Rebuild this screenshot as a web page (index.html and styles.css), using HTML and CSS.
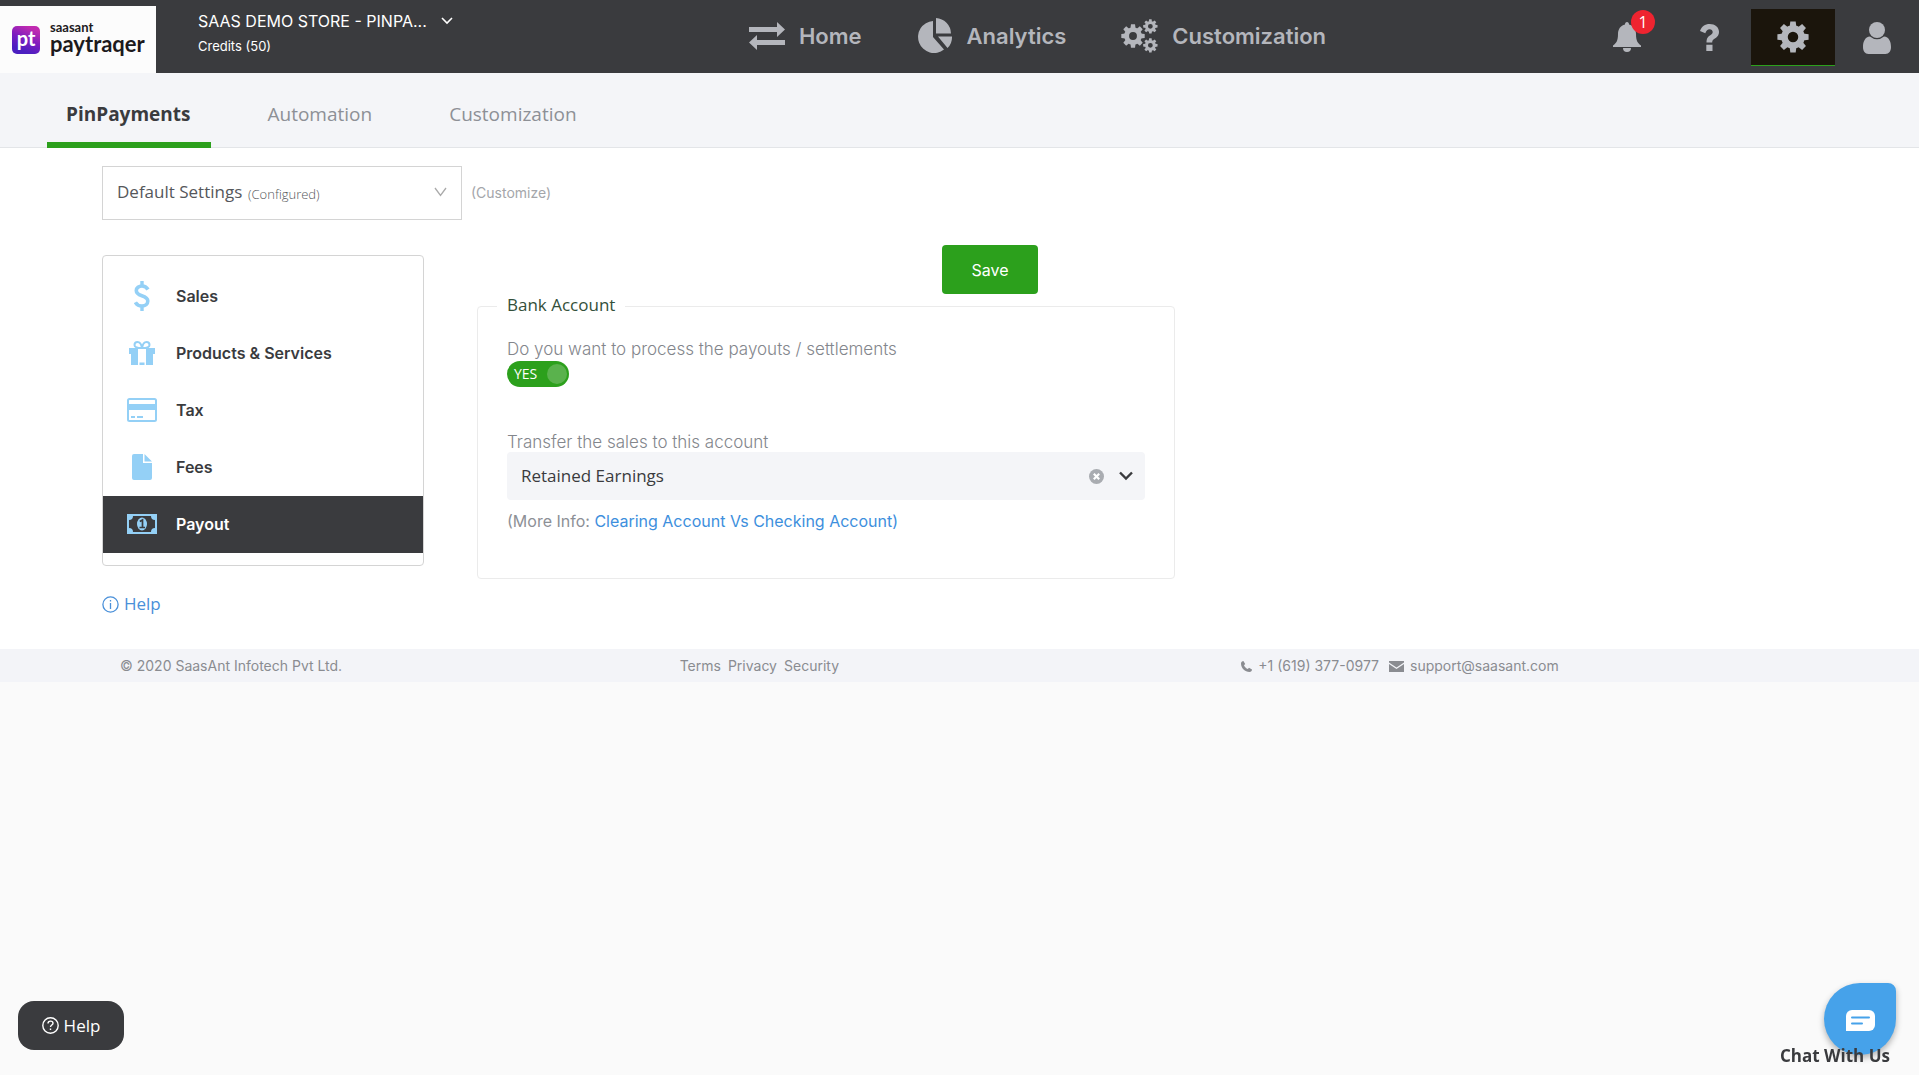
FILE: index.html
```html
<!DOCTYPE html>
<html lang="en">
<head>
<meta charset="utf-8">
<title>PinPayments settings - PayTraqer</title>
<link rel="stylesheet" href="styles.css">
</head>
<body>
<svg class="sprite" aria-hidden="true">
  <defs>
    <g id="gear">
      <circle cx="16" cy="16" r="8.500" fill="none" stroke="currentColor" stroke-width="6.500"/>
      <g fill="currentColor">
        <path id="tooth" d="M12.600 6 L13.300 .4 H18.700 L19.400 6 Z"/>
        <use href="#tooth" transform="rotate(45 16 16)"/>
        <use href="#tooth" transform="rotate(90 16 16)"/>
        <use href="#tooth" transform="rotate(135 16 16)"/>
        <use href="#tooth" transform="rotate(180 16 16)"/>
        <use href="#tooth" transform="rotate(225 16 16)"/>
        <use href="#tooth" transform="rotate(270 16 16)"/>
        <use href="#tooth" transform="rotate(315 16 16)"/>
      </g>
    </g>
  </defs>
</svg>

<header class="topbar">
  <a class="logo" href="#" aria-label="SaasAnt PayTraqer">
    <span class="logo-mark">pt</span>
    <span class="logo-text"><span class="logo-small">saasant</span><span class="logo-big">paytraqer</span></span>
  </a>
  <div class="store">
    <div class="store-row">
      <select class="store-select" aria-label="Store"><option>SAAS DEMO STORE - PINPA...</option></select>
      <svg width="12" height="8" viewBox="0 0 12 8" fill="none" stroke="currentColor" stroke-width="1.600"><path d="M1 1l5 5 5-5"/></svg>
    </div>
    <div class="credits">Credits (50)</div>
  </div>
  <nav class="main-nav">
    <a href="#">
      <svg width="36" height="28" viewBox="0 0 36 28" fill="currentColor"><path d="M0 5h28V0l8 7.500-8 7.500v-5H0zM36 18H8v-5l-8 7.500L8 28v-5h28z"/></svg>
      Home
    </a>
    <a href="#">
      <svg width="36" height="36" viewBox="0 0 36 36" fill="currentColor"><path d="M16 3v16l11 12.500A16 16 0 1 1 16 3zM19 0a16 16 0 0 1 15 15.500H19zM21 18.500h14a15 15 0 0 1-4.500 11.500z"/></svg>
      Analytics
    </a>
    <a href="#">
      <svg width="37" height="34" viewBox="0 0 37 34"><use href="#gear" transform="translate(0 5) scale(.75)"/><use href="#gear" transform="translate(22 0) scale(.46)"/><use href="#gear" transform="translate(22 19) scale(.46)"/></svg>
      Customization
    </a>
  </nav>
  <div class="tools">
    <button class="tool" type="button" aria-label="Notifications">
      <svg width="28" height="31" viewBox="0 0 28 31" fill="currentColor"><path d="M14 0c1.300 0 2 1 2 2.400 4.400 1 7 4.600 7 9.600 0 7 2 9.500 5 11.500V25H0v-1.500C3 21.500 5 19 5 12c0-5 2.600-8.600 7-9.600C12 1 12.700 0 14 0zM10 26h8a4 4 0 0 1-8 0z"/></svg>
      <span class="badge">1</span>
    </button>
    <button class="tool" type="button" aria-label="Help topics">
      <svg width="19" height="27" viewBox="0 0 19 27" fill="currentColor"><path d="M0 7C1.500 2.500 5 0 9.700 0 15 0 19 3.200 19 7.800c0 4-2.400 5.700-4.500 7-1.600 1-2.300 1.700-2.300 3.700H6.500c0-4.500 1.600-5.800 3.800-7.200 1.500-1 2.400-1.700 2.400-3.200 0-1.700-1.300-2.800-3.100-2.800-2 0-3.300 1.200-4.300 4zM6.300 20.700h6.200V27H6.300z"/></svg>
    </button>
    <button class="tool tool-active" type="button" aria-label="Settings">
      <svg width="32" height="32" viewBox="0 0 32 32"><use href="#gear"/></svg>
    </button>
    <button class="tool" type="button" aria-label="Account">
      <svg width="28" height="32" viewBox="0 0 28 32" fill="currentColor"><circle cx="14" cy="8" r="8"/><path d="M7 14.500a10.500 10.500 0 0 0 14 0c5 .5 7 5 7 10.500 0 4-2 7-5.500 7h-17C2 32 0 29 0 25c0-5.500 2-10 7-10.500z"/></svg>
    </button>
  </div>
</header>

<nav class="tabs">
  <a class="tab tab-current" href="#">PinPayments</a>
  <a class="tab" href="#">Automation</a>
  <a class="tab" href="#">Customization</a>
</nav>

<main class="content">
  <div class="profile-row">
    <div class="profile">
      <select class="profile-select" id="profile" aria-label="Settings profile"><option>Default Settings</option></select>
      <label class="profile-state" for="profile">(Configured)</label>
      <svg width="13" height="10" viewBox="0 0 13 10" fill="none" stroke="#aaa" stroke-width="1.300"><path d="M1 1l5.500 7.500L12 1"/></svg>
    </div>
    <a class="customize" href="#">(Customize)</a>
  </div>

  <div class="columns">
    <aside class="side">
      <nav class="menu">
        <a href="#"><svg width="16" height="30" viewBox="0 0 16 30" fill="none" stroke="currentColor"><path stroke-width="3.600" d="M14 8.500C12.500 6 10.500 5 8 5 4.800 5 2.300 6.700 2.300 9.500c0 3 2.400 4.200 5.500 5.200 3.500 1.100 6 2.200 6 5.300 0 3-2.500 5-5.800 5-2.800 0-5.200-1.300-6.600-3.700"/><path stroke-width="3.400" d="M8 0v5M8 25v5"/></svg>Sales</a>
        <a href="#"><svg width="26" height="24" viewBox="0 0 26 24"><path fill="currentColor" d="M0 7h26v6h-2v11h-7V8H9v16H2V13H0zM10.500 21.500h5V24h-5z"/><path fill="none" stroke="currentColor" stroke-width="2" d="M12.500 7C10 7 5.500 7 5.500 4c0-2 1.500-3 3-3 2.500 0 4 3 4.500 6 .500-3 2-6 4.500-6 1.500 0 3 1 3 3 0 3-4.500 3-7 3"/></svg>Products &amp; Services</a>
        <a href="#"><svg width="30" height="24" viewBox="0 0 30 24"><rect x="1" y="1" width="28" height="22" rx="1.500" fill="none" stroke="currentColor" stroke-width="2"/><path fill="currentColor" d="M1 6h28v6H1zM4 18h4v2H4zM10 18h6v2h-6z"/></svg>Tax</a>
        <a href="#"><svg width="20" height="26" viewBox="0 0 20 26" fill="currentColor"><path d="M2 0h9v9h9v15a2 2 0 0 1-2 2H2a2 2 0 0 1-2-2V2a2 2 0 0 1 2-2zM12.500 0L20 7.500h-7.500z"/></svg>Fees</a>
        <a class="menu-current" href="#"><svg width="30" height="20" viewBox="0 0 30 20"><path fill="currentColor" fill-rule="evenodd" d="M0 0h30v20H0zM6 2a4 4 0 0 1-4 4v8a4 4 0 0 1 4 4h18a4 4 0 0 1 4-4V6a4 4 0 0 1-4-4z"/><ellipse cx="15" cy="10" rx="5" ry="6.500" fill="currentColor"/><path fill="none" stroke="#3a3b3e" stroke-width="1.700" d="M12.800 7.500L15.500 6v7M12.500 13.500h5.500"/></svg>Payout</a>
      </nav>
      <a class="help-link" href="#"><svg width="17" height="17" viewBox="0 0 17 17" fill="none" stroke="currentColor" stroke-width="1.300"><circle cx="8.500" cy="8.500" r="7.600"/><path d="M8.500 7v6M8.500 4v1.500"/></svg>Help</a>
    </aside>

    <form class="panel">
      <button class="save" type="button">Save</button>
      <fieldset class="bank">
        <legend>Bank Account</legend>
        <label class="question" for="payouts">Do you want to process the payouts / settlements</label>
        <label class="switch"><span>YES</span><input type="checkbox" id="payouts" checked></label>
        <label class="question" for="account">Transfer the sales to this account</label>
        <div class="account">
          <select id="account"><option>Retained Earnings</option></select>
          <button class="clear" type="button" aria-label="Clear account"><svg width="15" height="15" viewBox="0 0 15 15"><circle cx="7.500" cy="7.500" r="7.500" fill="#a9acb1"/><path stroke="#fff" stroke-width="2.200" d="M4.800 4.800l5.400 5.400M10.200 4.800l-5.400 5.400"/></svg></button>
          <svg width="14" height="10" viewBox="0 0 14 10" fill="none" stroke="#3a3b3e" stroke-width="2.400"><path d="M1 1.500l6 6 6-6"/></svg>
        </div>
        <p class="more">(More Info: <a href="#">Clearing Account Vs Checking Account)</a></p>
      </fieldset>
    </form>
  </div>
</main>

<footer class="footer">
  <div>© 2020 SaasAnt Infotech Pvt Ltd.</div>
  <div class="footer-links"><a href="#">Terms</a><a href="#">Privacy</a><a href="#">Security</a></div>
  <div class="footer-contact">
    <a href="#"><svg width="11" height="11" viewBox="0 0 11 11" fill="currentColor"><path d="M2.400 0L4.200 3 3 4.200C3.600 5.800 5.200 7.400 6.800 8L8 6.800l3 1.800c0 1.200-1 2.400-2.500 2.400C4 11 0 7 0 2.500 0 1 1.200 0 2.400 0z"/></svg>+1 (619) 377-0977</a>
    <a href="#"><svg width="15" height="11" viewBox="0 0 15 11" fill="currentColor"><path d="M0 0h15v1.500L7.500 6.500 0 1.500zM0 3l7.500 5L15 3v8H0z"/></svg>support@saasant.com</a>
  </div>
</footer>

<button class="help-float" type="button"><svg width="17" height="17" viewBox="0 0 17 17" fill="none" stroke="currentColor" stroke-width="1.400"><circle cx="8.500" cy="8.500" r="7.700"/><path d="M6 6.500C6 3.300 11 3.500 11 6.300c0 1.700-2.500 1.800-2.500 3.700M8.500 11.500V13"/></svg>Help</button>

<button class="chat" type="button">
  <span class="chat-bubble"><svg width="29" height="21" viewBox="0 0 29 21"><path fill="#fff" d="M6 0h17a6 6 0 0 1 6 6v9a6 6 0 0 1-6 6H0V6a6 6 0 0 1 6-6z"/><path stroke="#46a2ea" stroke-width="2" stroke-linecap="round" d="M6 7.500h17M6 13.500h10"/></svg></span>
  <span class="chat-label">Chat With Us</span>
</button>
</body>
</html>
```
FILE: styles.css
```css
* { box-sizing: border-box; }
body {
  margin: 0;
  background: #fafafa;
  color: #3a3b3e;
  font: 16px/24px Inter, "Liberation Sans", sans-serif;
}
a { color: inherit; text-decoration: none; }
button, select { font: inherit; color: inherit; border: 0; padding: 0; margin: 0; background: none; appearance: none; cursor: pointer; }
svg { flex: none; display: block; }
.sprite { position: absolute; width: 0; height: 0; }

.topbar {
  display: grid;
  grid-template-columns: 156px 1fr auto 1fr;
  height: 73px;
  background: #3a3b3e;
  color: #fff;
}
.logo {
  display: flex;
  align-items: center;
  gap: 10px;
  margin-top: 6px;
  padding-left: 12px;
  background: #fcfcfc;
  color: #1d1a1c;
  font-family: Lato, sans-serif;
}
.logo-mark {
  width: 28px;
  height: 28px;
  border-radius: 5px;
  background: linear-gradient(25deg, #4b1fc0 20%, #7a1cc0 50%, #c02bb0 85%);
  color: #fff;
  font-size: 20px;
  font-weight: 700;
  line-height: 24px;
  text-align: center;
}
.logo-text { display: flex; flex-direction: column; padding-bottom: 4px; font-weight: 700; }
.logo-small { font-size: 13px; line-height: 13px; }
.logo-big { font-size: 22px; line-height: 20px; }
.store { padding: 8px 0 0 42px; }
.store-row { display: flex; align-items: center; gap: 14px; height: 26px; }
.store-select { font-size: 16px; line-height: 24px; }
.credits { font-size: 13px; line-height: 24px; }
.main-nav { display: flex; gap: 55px; padding-bottom: 2px; color: #b4b6bc; font-size: 22px; font-weight: 600; }
.main-nav a { display: flex; align-items: center; gap: 14px; }
.tools { display: flex; justify-content: flex-end; color: #b4b6bc; }
.tool { position: relative; display: flex; align-items: center; justify-content: center; width: 84px; height: 57px; margin-top: 9px; }
.tool-active { background: #1b150c; border-bottom: 1px solid #2ca01c; }
.tool:first-child { width: 80px; }
.badge {
  position: absolute;
  top: 1px;
  left: 44px;
  width: 24px;
  height: 24px;
  border-radius: 50%;
  background: #ee2430;
  color: #fff;
  font: 16px/24px "Open Sans", sans-serif;
}

.tabs {
  display: flex;
  gap: 38px;
  height: 75px;
  padding-left: 47px;
  background: #f4f5f8;
  border-bottom: 1px solid #e3e5e8;
  color: #8d9096;
  font-family: "Open Sans", sans-serif;
  font-size: 19px;
}
.tab { height: 75px; padding: 0 20px 0 19px; line-height: 82px; }
.tab-current { border-bottom: 6px solid #2ca01c; color: #3a3b3e; font-weight: 700; }

.content { padding: 18px 102px 33px; background: #fff; }
.profile-row { display: flex; align-items: center; gap: 9px; }
.profile {
  display: flex;
  align-items: center;
  gap: 5px;
  width: 360px;
  height: 54px;
  padding: 0 14px 2px;
  border: 1px solid #d4d4d4;
  color: #55575b;
  font-family: "Open Sans", sans-serif;
}
.profile-select { font-size: 17px; }
.profile-state { flex: 1; font-size: 13px; font-weight: 300; padding-top: 3px; }
.customize { color: #a4a6aa; font-size: 14px; }

.columns { display: flex; gap: 53px; margin-top: 25px; }
.side { width: 322px; padding-top: 10px; }
.menu { padding: 12px 0; border: 1px solid #d4d4d4; border-radius: 4px; }
.menu a {
  display: grid;
  grid-template-columns: 30px 1fr;
  column-gap: 19px;
  align-items: center;
  height: 57px;
  padding: 0 16px 2px 24px;
  font-weight: 600;
}
.menu a svg { justify-self: center; color: #94d0f6; }
.menu .menu-current { background: #3a3b3e; color: #fff; }
.help-link { display: flex; align-items: center; gap: 5px; margin-top: 26px; color: #4a90d9; font-family: "Open Sans", sans-serif; font-size: 17px; }

.panel { width: 698px; }
.save { display: block; width: 96px; height: 49px; margin-left: 465px; border-radius: 4px; background: #2ca01c; color: #fff; }
.bank { margin: 0; padding: 21px 29px 45px; border: 1px solid #ebebeb; border-radius: 4px; }
.bank legend { margin-left: -10px; padding: 0 10px 2px; color: #33503a; font: 17px/22px "Open Sans", sans-serif; }
.question { display: block; color: #83868c; font-size: 17px; line-height: 20px; font-weight: 300; }
.switch {
  display: flex;
  align-items: center;
  justify-content: space-between;
  width: 62px;
  height: 26px;
  margin: 2px 0 45px;
  padding: 0 2px 0 7px;
  border-radius: 13px;
  background: #2ca01c;
  color: #fff;
  font: 14px/24px "Open Sans", sans-serif;
}
.switch input { appearance: none; width: 20px; height: 20px; margin: 0; border-radius: 50%; background: #5ab24d; }
.account { display: flex; align-items: center; gap: 15px; height: 48px; padding-right: 12px; border-radius: 4px; background: #f4f5f8; font-family: "Open Sans", sans-serif; font-size: 17px; }
.account select { flex: 1; height: 48px; padding-left: 14px; }
.more { margin: 9px 0 0; color: #8d9096; }
.more a { color: #3d8fdd; }

.footer {
  display: grid;
  grid-template-columns: repeat(3, 1fr);
  padding: 5px 120px 4px;
  background: #f3f4f8;
  color: #8a8c91;
  font-size: 14px;
}
.footer-links { display: flex; gap: 7px; }
.footer-contact { display: flex; gap: 10px; padding-left: 2px; }
.footer-contact a { display: flex; align-items: center; gap: 6px; }

.help-float {
  position: fixed;
  left: 18px;
  bottom: 25px;
  display: flex;
  align-items: center;
  justify-content: center;
  gap: 5px;
  width: 106px;
  height: 49px;
  border-radius: 16px;
  background: #3a3b3e;
  color: #fff;
  font: 17px/24px "Open Sans", sans-serif;
}
.chat { position: fixed; right: 23px; bottom: 7px; display: flex; flex-direction: column; align-items: flex-end; }
.chat-bubble {
  display: flex;
  align-items: center;
  justify-content: center;
  width: 72px;
  height: 72px;
  padding-top: 3px;
  border-radius: 50% 8px 50% 50%;
  background: #46a2ea;
  box-shadow: 0 3px 6px rgba(0, 0, 0, .3);
}
.chat-label { margin: -11px 6px 0 0; font: 700 17px/24px "Open Sans", sans-serif; position: relative; }
```
